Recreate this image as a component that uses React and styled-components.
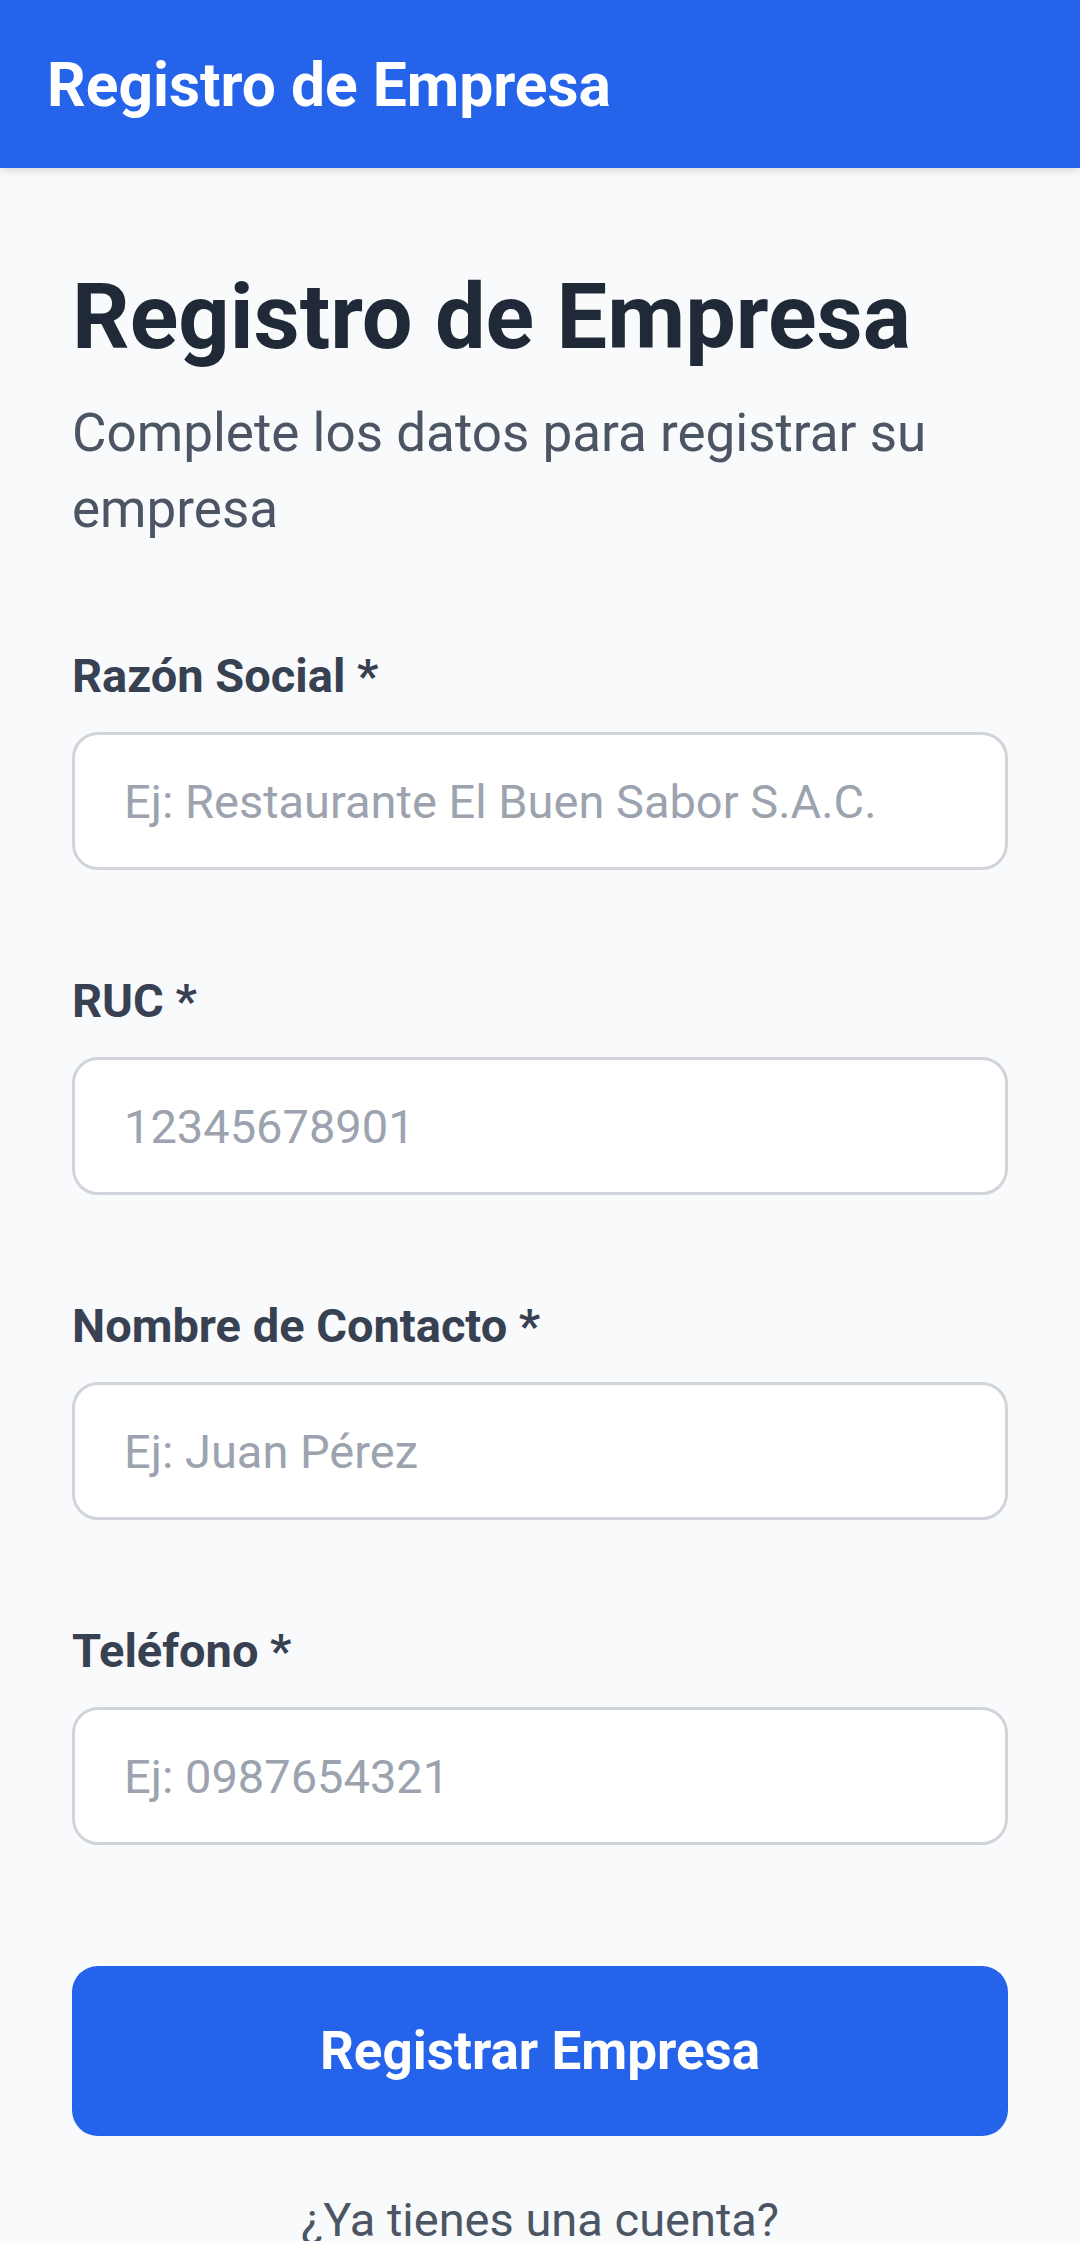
import React from 'react';
import styled, { createGlobalStyle } from 'styled-components';

const GlobalStyle = createGlobalStyle`
  * {
    box-sizing: border-box;
  }

  html, body {
    margin: 0;
    padding: 0;
    background: #f9fafb;
    font-family: Roboto, "Noto Sans", Arial, sans-serif;
  }
`;

const Page = styled.div`
  min-height: 100vh;
  background: #f9fafb;
`;

const Header = styled.header`
  height: 168px;
  background: #2563eb;
  display: flex;
  align-items: center;
  padding: 4px 47px 0;
  box-shadow: 0 3px 8px rgba(0, 0, 0, 0.12);
`;

const HeaderTitle = styled.h1`
  margin: 0;
  color: #ffffff;
  font-size: 60.5px;
  font-weight: 700;
  line-height: 1;
`;

const Content = styled.main`
  padding: 98px 72px 0;
`;

const Title = styled.h2`
  margin: 0;
  font-size: 90px;
  line-height: 104px;
  font-weight: 700;
  color: #1f2937;
`;

const Subtitle = styled.p`
  margin: 25px 0 0;
  font-size: 53px;
  line-height: 76px;
  color: #4b5563;
`;

const Form = styled.form`
  display: flex;
  flex-direction: column;
  margin-top: 97px;
`;

const Field = styled.div`
  display: flex;
  flex-direction: column;
  margin-bottom: 99px;
`;

const Label = styled.label`
  font-size: 47px;
  line-height: 63px;
  font-weight: 700;
  color: #374151;
  margin-bottom: 25px;
`;

const Input = styled.input`
  height: 138px;
  width: 100%;
  padding: 0 49px;
  border: 3px solid #d1d5db;
  border-radius: 26px;
  background: #ffffff;
  font-family: Roboto, "Noto Sans", Arial, sans-serif;
  font-size: 47px;
  color: #111827;
  outline: none;

  &::placeholder {
    color: #9ca3af;
  }
`;

const SubmitButton = styled.button`
  margin-top: 22px;
  height: 170px;
  width: 100%;
  border: none;
  border-radius: 26px;
  background: #2563eb;
  color: #ffffff;
  font-family: Roboto, "Noto Sans", Arial, sans-serif;
  font-size: 53px;
  font-weight: 700;
  cursor: pointer;
`;

const FooterText = styled.p`
  margin: 48px 0 0;
  text-align: center;
  font-size: 47px;
  line-height: 71px;
  color: #4b5563;
`;

const fields = [
  { id: 'razon', label: 'Razón Social *', placeholder: 'Ej: Restaurante El Buen Sabor S.A.C.' },
  { id: 'ruc', label: 'RUC *', placeholder: '12345678901' },
  { id: 'contacto', label: 'Nombre de Contacto *', placeholder: 'Ej: Juan Pérez' },
  { id: 'telefono', label: 'Teléfono *', placeholder: 'Ej: 0987654321' },
];

function App() {
  return (
    <Page>
      <GlobalStyle />
      <Header>
        <HeaderTitle>Registro de Empresa</HeaderTitle>
      </Header>
      <Content>
        <Title>Registro de Empresa</Title>
        <Subtitle>Complete los datos para registrar su empresa</Subtitle>
        <Form onSubmit={(e) => e.preventDefault()}>
          {fields.map((f) => (
            <Field key={f.id}>
              <Label htmlFor={f.id}>{f.label}</Label>
              <Input id={f.id} placeholder={f.placeholder} />
            </Field>
          ))}
          <SubmitButton type="submit">Registrar Empresa</SubmitButton>
        </Form>
        <FooterText>¿Ya tienes una cuenta?</FooterText>
      </Content>
    </Page>
  );
}

export default App;
